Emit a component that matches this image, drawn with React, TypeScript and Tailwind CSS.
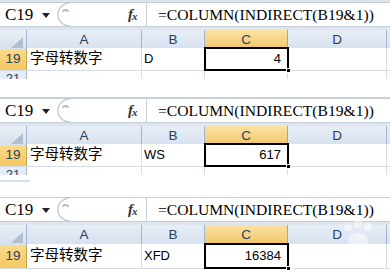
import React from 'react';

const cols = 'grid grid-cols-[27px_115px_63px_83px_99px_1fr]';

type PanelProps = {
  b: string;
  c: string;
  headerH: string;
  rowH: string;
  row21?: string;
};

const FormulaBar: React.FC = () => (
  <div className="flex h-[25px] border-y border-[#c5cfd9] bg-white">
    {/* Name box */}
    <div className="flex items-center w-[56px] pl-[5px] font-['Liberation_Serif',serif] text-[17px] text-black">
      <span>C19</span>
      <svg width="8" height="5" viewBox="0 0 8 5" className="ml-[9px] mt-[1px]">
        <path d="M0 0 L8 0 L4 5 Z" fill="#222" />
      </svg>
    </div>
    {/* Resize knob */}
    <div className="w-[72px] relative">
      <svg width="20" height="25" viewBox="0 0 20 25" className="absolute left-0 top-[-1px]">
        <path d="M15 0.5 C5 2 2 7 2 12.5 C2 18 5 23 15 24.5" fill="none" stroke="#b8c3cf" strokeWidth="1.2" />
        <path d="M7 9 C8 7.5 11 7.5 12 9" fill="none" stroke="#b0b8c2" strokeWidth="2" strokeLinecap="round" />
      </svg>
    </div>
    {/* fx */}
    <div className="w-[18px] flex items-center font-['Liberation_Serif',serif] italic font-bold text-[15px] text-[#333]">
      f<span className="text-[11px] -ml-[1px] mt-[3px]">x</span>
    </div>
    {/* formula */}
    <div className="flex-1 flex items-center border-l border-[#c5cfd9] pl-[11px] font-['Liberation_Serif',serif] text-[15.6px] text-black whitespace-nowrap overflow-hidden">
      =COLUMN(INDIRECT(B19&amp;1))
    </div>
  </div>
);

const Panel: React.FC<PanelProps> = ({ b, c, headerH, rowH, row21 }) => (
  <div className="flex flex-col font-['Liberation_Sans','Noto_Sans_CJK_SC',sans-serif]">
    <FormulaBar />
    <div className="h-[3px] bg-[#dfe5ec]" />
    {/* column headers */}
    <div className={`${cols} ${headerH} text-[13.5px] text-[#27415f] border-b border-[#9eb6ce]`}>
      <div className="relative bg-gradient-to-b from-[#e9eff7] to-[#d6e1ee] border-r border-[#9eb6ce]">
        <svg width="12" height="11" viewBox="0 0 12 11" className="absolute right-[3px] bottom-[2px]">
          <path d="M12 0 L12 11 L0 11 Z" fill="#b4bfcb" />
        </svg>
      </div>
      <div className="flex items-center justify-center bg-gradient-to-b from-[#e6edf6] to-[#d7e2ef] border-r border-[#9eb6ce]">A</div>
      <div className="flex items-center justify-center bg-gradient-to-b from-[#e6edf6] to-[#d7e2ef] border-r border-[#9eb6ce]">B</div>
      <div className="flex items-center justify-center bg-gradient-to-b from-[#fbe3a4] to-[#f2c462] border-r border-[#c9a44c]">C</div>
      <div className="flex items-center justify-center bg-gradient-to-b from-[#e6edf6] to-[#d7e2ef] border-r border-[#9eb6ce]">D</div>
      <div className="bg-gradient-to-b from-[#e6edf6] to-[#d7e2ef]" />
    </div>
    {/* row 19 */}
    <div className={`${cols} ${rowH} border-b border-[#d6dde7] bg-white`}>
      <div className="flex items-center justify-center bg-gradient-to-b from-[#fbdc8c] to-[#f4c862] border-r border-[#c9a44c] text-[13.5px] text-[#27415f]">19</div>
      <div className="flex items-center pl-[3px] border-r border-[#d6dde7] text-[14.5px] text-black">字母转数字</div>
      <div className="flex items-center pl-[2px] border-r border-[#d6dde7] text-[13px] text-black">{b}</div>
      <div className="relative flex items-center justify-end pr-[7px] text-[13px] text-black">
        {c}
        <div className="absolute -left-[1px] -top-[1px] -right-[1px] -bottom-[1px] border-[2px] border-black" />
        <div className="absolute -right-[3px] -bottom-[3px] w-[5px] h-[5px] bg-black border border-white" />
      </div>
      <div className="border-r border-[#d6dde7]" />
      <div />
    </div>
    {row21 && (
      <div className={`${cols} ${row21} overflow-hidden bg-white`}>
        <div className="flex justify-center pt-[1px] bg-[#e4ecf7] border-r border-[#9eb6ce] text-[13px] leading-[14px] text-[#27415f]">21</div>
        <div className="border-r border-[#d6dde7]" />
        <div className="border-r border-[#d6dde7]" />
        <div className="border-r border-[#d6dde7]" />
        <div className="border-r border-[#d6dde7]" />
        <div />
      </div>
    )}
  </div>
);

const App: React.FC = () => {
  return (
    <div className="w-[390px] h-[272px] overflow-hidden bg-white flex flex-col">
      <div className="h-[2px] bg-[#dbe3ec]" />
      <Panel b="D" c="4" headerH="h-[18px]" rowH="h-[23px]" row21="h-[8px]" />
      <div className="h-[18px] bg-white" />
      <div className="h-px bg-[#c9d1da]" />
      <Panel b="WS" c="617" headerH="h-[18px]" rowH="h-[23px]" row21="h-[8px]" />
      <div className="h-[5px] bg-white" />
      <div className="h-[2px] w-[30px] bg-[#d6e0ec]" />
      <div className="h-[15px] bg-white" />
      <div className="relative">
        <Panel b="XFD" c="16384" headerH="h-[19px]" rowH="h-[25px]" />
        {/* faint watermark paw */}
        <svg width="40" height="34" viewBox="0 0 40 34" className="absolute left-[338px] top-[22px] opacity-50">
          <circle cx="10" cy="8" r="4" fill="#fff" />
          <circle cx="20" cy="5" r="4" fill="#fff" />
          <circle cx="30" cy="8" r="4" fill="#fff" />
          <ellipse cx="20" cy="22" rx="10" ry="8" fill="#fff" />
        </svg>
      </div>
    </div>
  );
};

export default App;
